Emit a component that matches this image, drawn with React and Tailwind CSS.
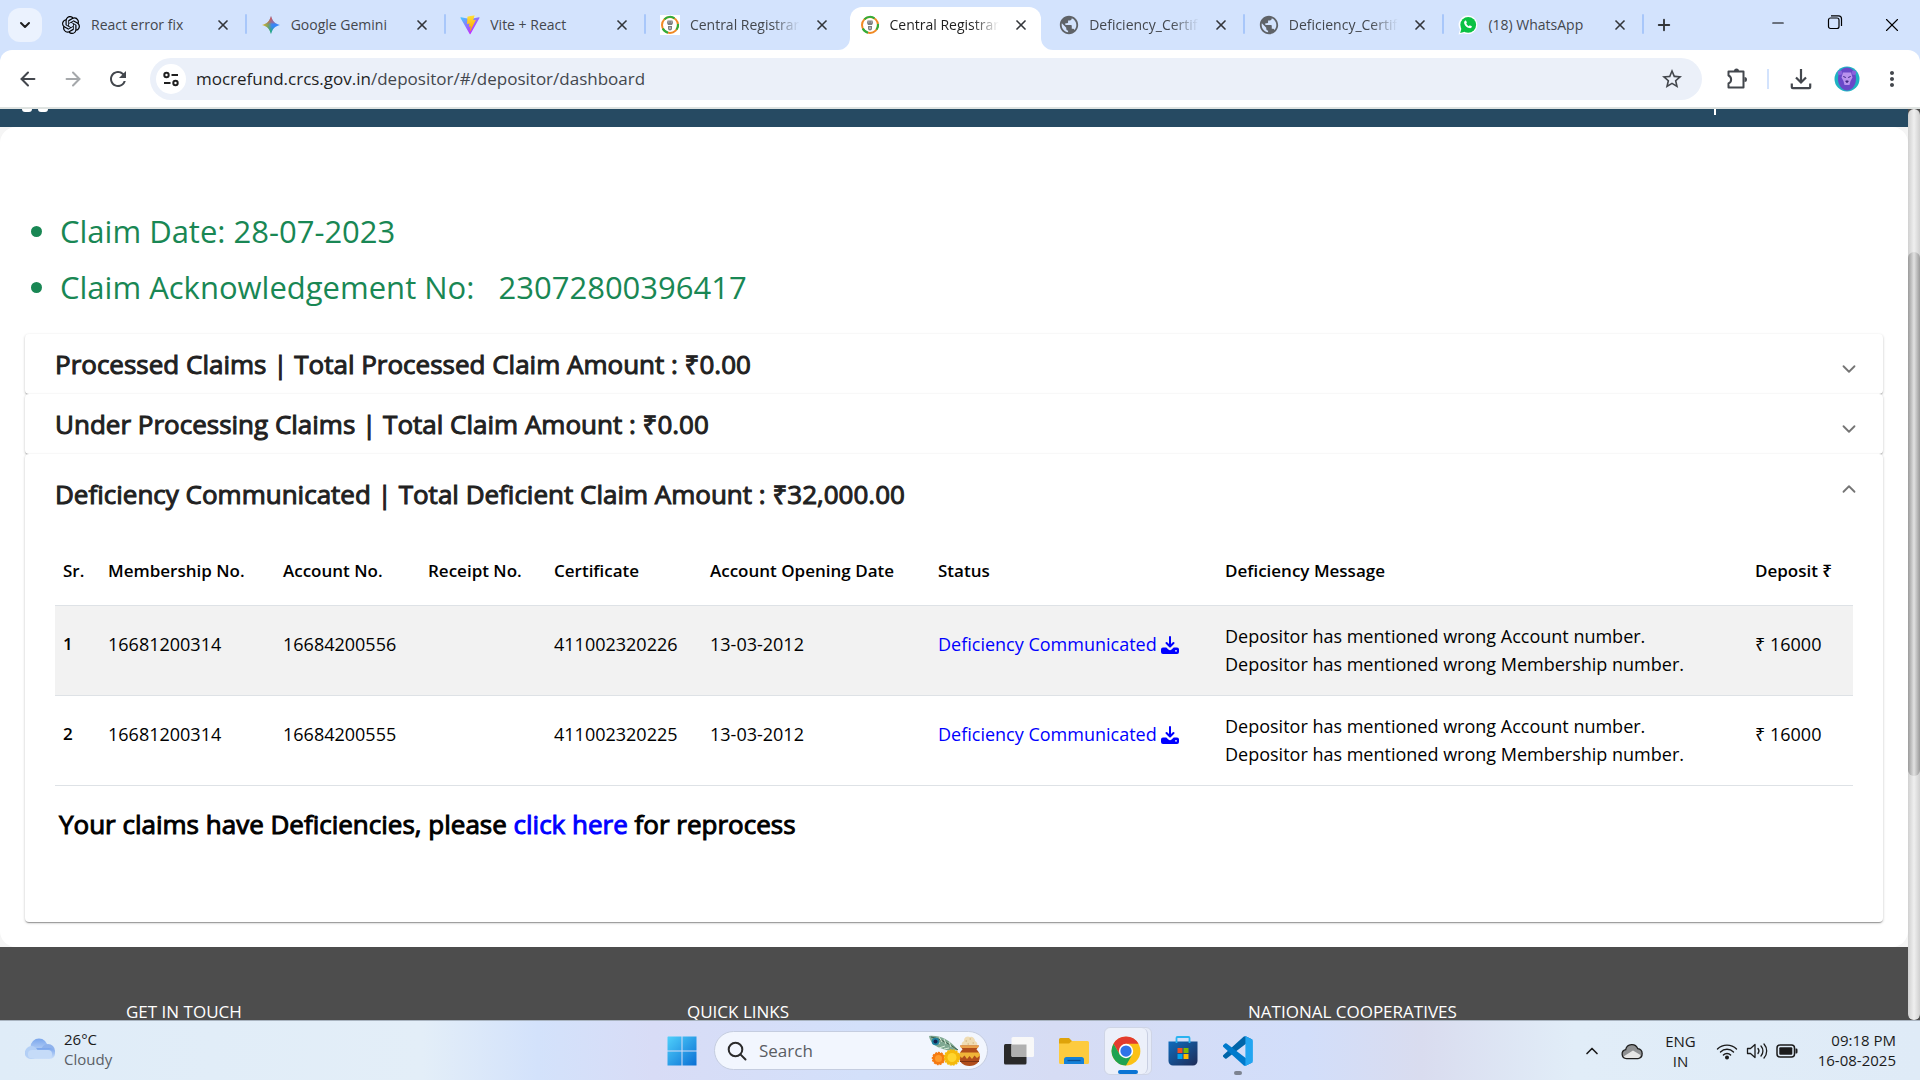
import React from "react";
import { SiOpenai } from "react-icons/si";
import { MdPublic, MdStarBorder, MdMoreVert, MdRefresh } from "react-icons/md";
import { ArrowLeft, ArrowRight, ChevronDown, ChevronUp, Minus, Plus, X } from "lucide-react";

function GeminiIcon() {
  return (
    <svg viewBox="0 0 18 18" className="size-[18px]">
      <defs>
        <linearGradient id="gemH" x1="0" y1="0" x2="1" y2="0">
          <stop offset="0" stopColor="#f6b80c" />
          <stop offset="0.35" stopColor="#7fa35c" />
          <stop offset="0.55" stopColor="#3b86f6" />
          <stop offset="1" stopColor="#3186ff" />
        </linearGradient>
        <linearGradient id="gemV" x1="0" y1="0" x2="0" y2="1">
          <stop offset="0" stopColor="#f0433c" />
          <stop offset="0.38" stopColor="#e8564a" stopOpacity="0.4" />
          <stop offset="0.5" stopColor="#3186ff" stopOpacity="0" />
          <stop offset="0.7" stopColor="#12b35c" stopOpacity="0.3" />
          <stop offset="1" stopColor="#0ebc5f" />
        </linearGradient>
      </defs>
      <path d="M9 0c1.200 5 4 7.800 9 9-5 1.200-7.800 4-9 9-1.200-5-4-7.800-9-9 5-1.200 7.800-4 9-9z" fill="url(#gemH)" />
      <path d="M9 0c1.200 5 4 7.800 9 9-5 1.200-7.800 4-9 9-1.200-5-4-7.800-9-9 5-1.200 7.800-4 9-9z" fill="url(#gemV)" />
    </svg>
  );
}

function ViteIcon() {
  return (
    <svg viewBox="0 0 410 404" className="size-5">
      <defs>
        <linearGradient id="viteA" x1="6" y1="33" x2="235" y2="344" gradientUnits="userSpaceOnUse">
          <stop stopColor="#41d1ff" />
          <stop offset="1" stopColor="#bd34fe" />
        </linearGradient>
        <linearGradient id="viteB" x1="194" y1="8" x2="236" y2="293" gradientUnits="userSpaceOnUse">
          <stop stopColor="#ffea83" />
          <stop offset="0.08" stopColor="#ffdd35" />
          <stop offset="1" stopColor="#ffa800" />
        </linearGradient>
      </defs>
      <path d="M399.600 59.500 215.600 388.500c-3.800 6.800-13.500 6.800-17.400.1L10.600 59.600c-4.200-7.500 2.100-16.500 10.500-15l184.200 32.900c1.200.2 2.400.2 3.500 0l180.300-32.900c8.400-1.500 14.800 7.400 10.500 14.900z" fill="url(#viteA)" />
      <path d="M293 1.600 156.800 28.300c-2.200.4-3.900 2.300-4 4.600l-8.400 141.500c-.2 3.300 2.900 5.900 6.100 5.200l37.900-8.800c3.600-.8 6.800 2.300 6 5.900l-11.300 55.200c-.8 3.700 2.700 6.900 6.300 5.800l23.400-7.100c3.600-1.100 7.100 2.100 6.300 5.800L201.300 323c-1.100 5.400 6.100 8.400 9.100 3.700l2-3.100L323.200 102.600c1.900-3.700-1.300-7.900-5.400-7.100l-39 7.500c-3.700.7-6.800-2.700-5.800-6.300l25.500-88.300c1.100-3.700-2.100-7.200-5.500-6.800z" fill="url(#viteB)" />
    </svg>
  );
}

function EmblemIcon() {
  return (
    <svg viewBox="0 0 20 20" className="size-5 bg-white">
      <circle cx="10" cy="10" r="8" fill="#fff" stroke="#f08a24" strokeWidth="2" />
      <path d="M4.500 4.200A8 8 0 0 1 14.500 3.300M2.800 13.500A8 8 0 0 0 8 17.700M16.500 14.700A8 8 0 0 0 18 9" fill="none" stroke="#2fae3a" strokeWidth="2.200" />
      <path d="M7.500 5.500h5l.5 2.500-1 2h-4l-1-2zM8 11h4v2.500a2 2 0 0 1-4 0z" fill="#7c7f82" />
      <path d="M8.500 7h.8M10.800 7h.8M9 13h2" stroke="#e9e9e9" />
    </svg>
  );
}

function WhatsappTabIcon() {
  return (
    <svg viewBox="0 0 20 20" className="size-5">
      <path d="M10 .5a9.300 9.300 0 1 1-4 17.700L.5 19.500 2 14.600A9.300 9.300 0 0 1 10 .5z" fill="#fff" />
      <circle cx="10.200" cy="9.800" r="7.900" fill="#0bc143" />
      <path d="M2.200 18l1.300-4.800 3.400 3.500z" fill="#0bc143" />
      <path d="M7.300 5.600c.5-.2.800 0 1 .5l.5 1.300c.1.300 0 .6-.6 1.200.5 1.200 1.500 2.100 2.700 2.600.5-.6.8-1 1.200-.8l1.400.7c.4.200.5.500.2 1.100-.6 1-1.500 1.200-2.600.9-2.400-.7-4-2.200-4.900-4.600-.3-1.300.2-2.400 1.100-2.900z" fill="#fff" />
    </svg>
  );
}

const GlobeIcon = () => <MdPublic className="size-[22px] text-[#5f6368]" />;
const OpenAiTabIcon = () => <SiOpenai className="size-[18px] text-black" />;

const TABS = [
  { title: "React error fix", Icon: OpenAiTabIcon, divider: true },
  { title: "Google Gemini", Icon: GeminiIcon, divider: true },
  { title: "Vite + React", Icon: ViteIcon, divider: true },
  { title: "Central Registrar", Icon: EmblemIcon, fade: true },
  { title: "Central Registrar", Icon: EmblemIcon, fade: true, active: true },
  { title: "Deficiency_Certif", Icon: GlobeIcon, fade: true, divider: true },
  { title: "Deficiency_Certif", Icon: GlobeIcon, fade: true, divider: true },
  { title: "(18) WhatsApp", Icon: WhatsappTabIcon, divider: true },
];

function TabCurve({ className }) {
  return (
    <svg viewBox="0 0 12 12" className={className} aria-hidden="true">
      <path d="M12 0v12H0A12 12 0 0 0 12 0z" fill="#fff" />
    </svg>
  );
}

function Tab({ title, Icon, fade, divider, active }) {
  return (
    <div className="relative flex h-[50px] min-w-0 flex-1 items-end">
      {active && (
        <>
          <div className="absolute inset-x-1 top-[7px] bottom-0 rounded-t-xl bg-white" />
          <TabCurve className="absolute bottom-0 -left-2 size-3" />
          <TabCurve className="absolute -right-2 bottom-0 size-3 -scale-x-100" />
        </>
      )}
      <div className="relative flex h-[50px] w-full items-center pr-4 pl-[13px]">
        <span className="flex w-[22px] shrink-0 justify-center"><Icon /></span>
        <span
          className={
            "ml-[9px] w-0 flex-1 text-sm whitespace-nowrap " +
            (fade ? "[mask-image:linear-gradient(to_right,black_75%,transparent)] " : "") +
            (active ? "text-[#1f1f1f]" : "text-[#43474d]")
          }
        >
          {title}
        </span>
        <button aria-label={"Close " + title} className="ml-[14px] shrink-0 text-[#33363a]">
          <X className="size-4" strokeWidth={2.500} />
        </button>
      </div>
      {divider && <div className="absolute top-[14px] right-0 h-5 w-0.5 rounded bg-[#a8c7fa]" />}
    </div>
  );
}

function TabStrip() {
  return (
    <div className="flex h-[50px] shrink-0 items-center bg-[#d3e3fd] pl-2">
      <button aria-label="Search tabs" className="mr-[5px] flex size-[34px] shrink-0 items-center justify-center rounded-xl bg-[#ebf2fe] text-[#1f1f1f]">
        <ChevronDown className="size-4" strokeWidth={3} />
      </button>
      <div className="flex min-w-0 max-w-[1597px] flex-1">
        {TABS.map((t, i) => <Tab key={i} {...t} />)}
      </div>
      <button aria-label="New tab" className="ml-[11px] text-[#33363a]">
        <Plus className="size-[18px]" strokeWidth={2.500} />
      </button>
      <div className="ml-auto flex shrink-0 text-black">
        <button aria-label="Minimize" className="flex w-[57px] justify-center"><Minus className="size-[18px]" strokeWidth={1.500} /></button>
        <button aria-label="Restore" className="flex w-[57px] justify-center">
          <svg viewBox="0 0 16 16" className="size-4" fill="none" stroke="currentColor" strokeWidth="1.200">
            <rect x="1.500" y="4" width="10.500" height="10.500" rx="2" />
            <path d="M4 1.800h7.500a3 3 0 0 1 3 3V12" />
          </svg>
        </button>
        <button aria-label="Close window" className="flex w-[57px] justify-center"><X className="size-[22px]" strokeWidth={1.200} /></button>
      </div>
    </div>
  );
}

function Toolbar() {
  return (
    <div className="shrink-0 bg-[#d3e3fd]">
      <div className="flex h-[57px] items-center rounded-t-xl bg-white pr-4 pl-[17px] text-[#43474d]">
        <button aria-label="Back" className="mr-[23px]"><ArrowLeft className="size-[22px]" strokeWidth={2.200} /></button>
        <button aria-label="Forward" className="mr-[22px] text-[#a5a8ab]"><ArrowRight className="size-[22px]" strokeWidth={2.200} /></button>
        <button aria-label="Reload" className="mr-5"><MdRefresh className="size-6" /></button>
        <div className="flex h-[42px] min-w-0 flex-1 items-center rounded-full bg-[#ebf0f9] pr-[18px] pl-1.5">
          <button aria-label="Site information" className="flex size-[30px] shrink-0 items-center justify-center rounded-full bg-white text-[#1f1f1f]">
            <svg viewBox="0 0 18 18" className="size-[18px]" fill="none" stroke="currentColor" strokeWidth="2">
              <circle cx="4.500" cy="5" r="2.200" />
              <path d="M9.500 5H16M2 13h6.500" />
              <circle cx="13.500" cy="13" r="2.200" />
            </svg>
          </button>
          <a href="#/depositor/dashboard" className="ml-2.5 min-w-0 flex-1 truncate text-[17px] text-[#43474d]">
            <span className="text-[#1f1f1f]">mocrefund.crcs.gov.in</span>/depositor/#/depositor/dashboard
          </a>
          <button aria-label="Bookmark"><MdStarBorder className="size-6" /></button>
        </div>
        <button aria-label="Extensions" className="ml-[22px]">
          <svg viewBox="0 0 24 24" className="size-6" fill="none" stroke="currentColor" strokeWidth="2" strokeLinejoin="round">
            <path d="M4.500 4.500H19.500V20.500H4.500V16.500C8 15 8 10 4.500 8.500z" />
            <path d="M10 4a2.500 2.500 0 0 1 5 0zM20.500 10a2.500 2.500 0 0 1 0 5z" fill="currentColor" stroke="none" />
          </svg>
        </button>
        <div className="ml-[19px] h-5 w-0.5 bg-[#d3e3fd]" />
        <button aria-label="Downloads" className="ml-[21px]">
          <svg viewBox="0 0 22 22" className="size-[22px]" fill="none" stroke="currentColor" strokeWidth="2.200">
            <path d="M11 1v13M6 9.500l5 5 5-5M1.800 15.500v3.700a1 1 0 0 0 1 1h16.400a1 1 0 0 0 1-1v-3.700" />
          </svg>
        </button>
        <button aria-label="Profile" className="ml-[22px]">
          <svg viewBox="0 0 26 26" className="size-[26px]">
            <circle cx="13" cy="13" r="12.500" fill="#1fb3c3" />
            <path d="M13 1.500c5 0 9 4.500 9 11.500 0 6-4 11.500-9 11.500S4 19 4 13C4 6 8 1.500 13 1.500z" fill="#6a48c9" />
            <circle cx="6" cy="6.800" r="2.300" fill="#8a63dc" />
            <circle cx="20" cy="6.800" r="2.300" fill="#8a63dc" />
            <path d="M9 6.500h8l1.500 5-2 3.500-1 4h-5l-1-4-2-3.500z" fill="#b993ee" />
            <path d="M9.300 10.500l2.500 1M16.700 10.500l-2.500 1M11.700 15h2.600L13 16.700z" stroke="#3b2582" fill="#3b2582" />
          </svg>
        </button>
        <button aria-label="Menu" className="ml-5"><MdMoreVert className="size-6" /></button>
      </div>
      <div className="h-0.5 bg-[#dfe3e1]" />
    </div>
  );
}

function DownloadIcon() {
  return (
    <svg viewBox="0 0 18 18" className="inline size-[18px] align-[-3px]" aria-hidden="true">
      <path d="M9 1v9M5.500 7 9 10.500 12.500 7" fill="none" stroke="currentColor" strokeWidth="2" strokeLinecap="round" strokeLinejoin="round" />
      <path d="M2 11.500h3.300L7.400 13.600a2.300 2.300 0 0 0 3.200 0l2.100-2.100H16a2 2 0 0 1 2 2V16a2 2 0 0 1-2 2H2a2 2 0 0 1-2-2v-2.500a2 2 0 0 1 2-2z" fill="currentColor" />
      <circle cx="15" cy="14.800" r="0.900" fill="#fff" />
    </svg>
  );
}

const PANEL = "rounded bg-white shadow-[0_2px_1px_-1px_rgba(0,0,0,.2),0_1px_1px_rgba(0,0,0,.14),0_1px_3px_rgba(0,0,0,.2)]";
const HEADING = "text-[26px] leading-9 text-[#212121] [-webkit-text-stroke:1px]";

function CollapsedPanel({ title }) {
  return (
    <section className={PANEL}>
      <button aria-expanded="false" className="flex h-[60px] w-full items-center justify-between pr-[23px] pl-[30px]">
        <span className={HEADING}>{title}</span>
        <ChevronDown className="mt-2.5 size-[22px] text-[#757575]" strokeWidth={2} />
      </button>
    </section>
  );
}

const COLUMNS = ["Sr.", "Membership No.", "Account No.", "Receipt No.", "Certificate", "Account Opening Date", "Status", "Deficiency Message", "Deposit ₹"];

const ROWS = [
  { sr: 1, membership: "16681200314", account: "16684200556", certificate: "411002320226", date: "13-03-2012" },
  { sr: 2, membership: "16681200314", account: "16684200555", certificate: "411002320225", date: "13-03-2012" },
];

function ClaimsTable() {
  return (
    <table className="mt-1 w-full table-fixed text-left text-lg leading-7 text-black">
      <colgroup>
        <col className="w-[45px]" />
        <col className="w-[175px]" />
        <col className="w-[145px]" />
        <col className="w-[126px]" />
        <col className="w-[156px]" />
        <col className="w-[228px]" />
        <col className="w-[287px]" />
        <col />
        <col className="w-[106px]" />
      </colgroup>
      <thead>
        <tr className="h-[67px] border-b border-[#dee2e6]">
          {COLUMNS.map((c) => <th key={c} scope="col" className="px-2 text-[17px] font-semibold whitespace-nowrap">{c}</th>)}
        </tr>
      </thead>
      <tbody>
        {ROWS.map((r) => (
          <tr key={r.sr} className="h-[90px] border-b border-[#dee2e6] align-top odd:bg-[#f2f2f2]">
            <th scope="row" className="px-2 pt-6 text-[17px] font-semibold">{r.sr}</th>
            <td className="px-2 pt-6">{r.membership}</td>
            <td className="px-2 pt-6">{r.account}</td>
            <td className="px-2 pt-6" />
            <td className="px-2 pt-6">{r.certificate}</td>
            <td className="px-2 pt-6">{r.date}</td>
            <td className="px-2 pt-6 whitespace-nowrap">
              <a href="#deficiency" className="text-[#0000ff]">Deficiency Communicated <DownloadIcon /></a>
            </td>
            <td className="px-2 pt-4 whitespace-nowrap">
              <p>Depositor has mentioned wrong Account number.</p>
              <p>Depositor has mentioned wrong Membership number.</p>
            </td>
            <td className="px-2 pt-6 whitespace-nowrap">₹ 16000</td>
          </tr>
        ))}
      </tbody>
    </table>
  );
}

function WebPage() {
  return (
    <div className="flex min-h-0 flex-1 overflow-hidden bg-[#4d4d4d]">
      <div className="min-w-0 flex-1">
        <header className="flex h-[18px] items-start justify-between bg-[#264a62] pr-48 pl-[22px]">
          <div className="flex gap-1.5">
            <span className="h-[3px] w-2.5 rounded-b bg-white" />
            <span className="h-[3px] w-2.5 rounded-b bg-white" />
          </div>
          <span className="h-1.5 w-0.5 bg-white" />
        </header>
        <div className="bg-[#f5f5f5]">
          <main className="rounded-2xl bg-white px-[25px] pt-[76px] pb-[25px]">
            <ul className="list-disc pl-[35px] text-[31px] leading-[56px] text-[#198754]">
              <li>Claim Date: 28-07-2023</li>
              <li>Claim Acknowledgement No: &nbsp; 23072800396417</li>
            </ul>
            <div className="mt-[19px]">
              <CollapsedPanel title="Processed Claims | Total Processed Claim Amount : ₹0.00" />
              <CollapsedPanel title="Under Processing Claims | Total Claim Amount : ₹0.00" />
              <section className={PANEL}>
                <button aria-expanded="true" className="flex h-[80px] w-full items-center justify-between pr-[23px] pl-[30px]">
                  <span className={HEADING}>Deficiency Communicated | Total Deficient Claim Amount : ₹32,000.00</span>
                  <ChevronUp className="mb-2.5 size-[22px] text-[#757575]" strokeWidth={2} />
                </button>
                <div className="px-[30px] pb-[80px]">
                  <ClaimsTable />
                  <p className="mt-5 pl-1 text-[26px] leading-9 text-black [-webkit-text-stroke:1px]">
                    Your claims have Deficiencies, please <a href="#reprocess" className="text-[#0000ff]">click here</a> for reprocess
                  </p>
                </div>
              </section>
            </div>
          </main>
        </div>
        <footer className="grid grid-cols-3 bg-[#4d4d4d] pt-[51px] pr-[99px] pl-[126px] text-[17px] leading-7 text-white">
          <h2>GET IN TOUCH</h2>
          <h2>QUICK LINKS</h2>
          <h2>NATIONAL COOPERATIVES</h2>
        </footer>
      </div>
      <div className="w-3 shrink-0 rounded-full bg-linear-to-r from-[#d0d0d0] via-[#efefef] to-[#d0d0d0] pt-[143px]">
        <div className="h-[524px] rounded-full bg-linear-to-r from-[#9a9a9a] via-[#e2e2e2] to-[#9a9a9a]" />
      </div>
    </div>
  );
}

function Taskbar() {
  return (
    <div className="grid h-[60px] shrink-0 grid-cols-[1fr_auto_1fr] items-center border-t border-[#a9b4c0] bg-[linear-gradient(90deg,#dfecf8_0%,#e3eef8_22%,#d3e2fb_28%,#d8dcf6_34%,#d3e0fa_45%,#d6dcf4_55%,#d2defa_68%,#d9dcef_74%,#e1edf8_82%,#dfebf7_100%)] text-[15px] text-[#1b1b1b]">
      <button className="flex items-center gap-2 pb-1 pl-6 text-left leading-5">
        <svg viewBox="0 0 32 22" className="w-8">
          <defs>
            <linearGradient id="wc" x1="0" y1="0" x2="0" y2="1">
              <stop offset="0" stopColor="#7ba6ec" />
              <stop offset="1" stopColor="#cfe2fb" />
            </linearGradient>
          </defs>
          <circle cx="15" cy="9" r="8.500" fill="url(#wc)" />
          <circle cx="24" cy="13" r="7" fill="#8fb2ec" />
          <rect x="1" y="10" width="30" height="11" rx="5.500" fill="url(#wc)" />
          <circle cx="7.500" cy="14.500" r="6.500" fill="#b4d0f6" />
          <rect x="4" y="12" width="24" height="8.500" rx="4" fill="#c5dbf8" />
        </svg>
        <span>
          <span className="block">26°C</span>
          <span className="block text-[#5a5f66]">Cloudy</span>
        </span>
      </button>

      <div className="flex items-center">
        <button aria-label="Start">
          <svg viewBox="0 0 30 30" className="size-[30px]">
            <defs>
              <linearGradient id="win" x1="0" y1="0" x2="1" y2="1">
                <stop offset="0" stopColor="#4fd0fb" />
                <stop offset="1" stopColor="#0a6fd4" />
              </linearGradient>
            </defs>
            <path d="M1 .5h13.500v14H.5V1zM15.500.5H29.500v14h-14zM.5 15.500h14v14H.5zM15.500 15.500h14v14h-14z" fill="url(#win)" />
          </svg>
        </button>
        <label className="ml-[17px] flex h-[39px] w-[274px] items-center rounded-full border border-[#c5cde0] bg-[#f2f6fe] pr-1.5 pl-3">
          <svg viewBox="0 0 20 20" className="size-5 shrink-0" fill="none" stroke="#2b2b2b" strokeWidth="2">
            <circle cx="8.500" cy="8.500" r="6.800" />
            <path d="M13.400 13.400 18.500 18.500" strokeLinecap="round" />
          </svg>
          <input type="text" placeholder="Search" aria-label="Search" className="ml-3 w-0 flex-1 bg-transparent text-[17px] outline-none placeholder:text-[#5a5d63]" />
          <svg viewBox="0 0 52 32" className="h-8 w-[52px] shrink-0">
            <path d="M0 1c10-1 20 3 29 14-4 1-10 1-15-1C6 12 1 7 0 1z" fill="#7fa892" />
            <path d="M2 2c10 2 18 7 27 13" stroke="#3f5f4a" fill="none" />
            <path d="M10 2l3 5M15 4l2 5M20 7l2 5M5 10l6-2M10 13l6-2M15 14l5-1" stroke="#d6ead6" fill="none" />
            <circle cx="6.500" cy="6.500" r="3.800" fill="#1d7f9f" />
            <circle cx="6.500" cy="6.500" r="2" fill="#16224f" />
            <path d="M33 11a4 4 0 0 1 2-5 4 4 0 0 1 6-4 4 4 0 0 1 5 4 4 4 0 0 1 2 5z" fill="#efdcb4" />
            <path d="M37 6h.5M41 4h.5M44 8h.5M39 9h.5" stroke="#c9ab74" strokeLinecap="round" />
            <path d="M31 10.500h19l-2.500 4c6 5 4 16.500-7 16.500s-13-11.500-7-16.500z" fill="#b04d1a" />
            <path d="M31 10.500h19l-1 2.500H32z" fill="#e9a04a" />
            <path d="M31 17.500h19l1 3-3 2.500-2.500-2.500L43 24l-2.500-3-2.500 3-2.500-3.500L33 23l-3-2.500z" fill="#f0b438" />
            <path d="M31 26.500h19" stroke="#7d3210" />
            <circle cx="9.500" cy="23.500" r="6" fill="#f57a12" stroke="#f57a12" strokeWidth="1.500" strokeDasharray="2 1" />
            <circle cx="9.500" cy="23.500" r="3.500" fill="#ff9b2c" />
            <circle cx="23" cy="22.500" r="7.500" fill="#f5b90c" stroke="#f5b90c" strokeWidth="1.500" strokeDasharray="2 1" />
            <circle cx="23" cy="22.500" r="4.500" fill="#ffd52e" />
          </svg>
        </label>
        <button aria-label="Task view" className="ml-[15px]">
          <svg viewBox="0 0 32 30" className="h-[30px] w-8">
            <rect x="1" y="8" width="22.500" height="20.500" rx="1.500" fill="#2a2a2a" />
            <rect x="8.500" y="1" width="22.500" height="20" rx="1.500" fill="#f8f8f8" />
            <path d="M8.500 8.500h15v12.500H10a1.500 1.500 0 0 1-1.500-1.500z" fill="#b0b0b0" />
          </svg>
        </button>
        <button aria-label="File Explorer" className="ml-6">
          <svg viewBox="0 0 30 28" className="h-7 w-[30px]">
            <path d="M0 2.500A1.500 1.500 0 0 1 1.500 1H10l3 3v6H0z" fill="#dfa30a" />
            <path d="M0 6.500h10L13 4h15.500A1.500 1.500 0 0 1 30 5.500v20a1.500 1.500 0 0 1-1.500 1.500h-27A1.500 1.500 0 0 1 0 25.500z" fill="#fdcb3f" />
            <path d="M5 27v-4.500A2.500 2.500 0 0 1 7.500 20h15a2.500 2.500 0 0 1 2.500 2.500V27z" fill="#1480d8" />
            <path d="M8.500 23.500h13" stroke="#0b4f91" strokeWidth="1.300" />
          </svg>
        </button>
        <div className="relative ml-[15px] h-12 w-12 rounded-md border border-[#cfd5e6] bg-[#e6ebf8]">
          <button aria-label="Google Chrome" className="flex h-[46px] w-[43px] items-center justify-center rounded-md border-r border-[#c9cfe2] bg-[#ecf0fa] pr-px">
            <svg viewBox="0 0 48 48" className="size-[30px]">
              <circle cx="24" cy="24" r="23" fill="#fbc116" />
              <path d="M4.080 12.500A23 23 0 0 1 43.920 12.500H24L14 29.750z" fill="#e33b2e" />
              <path d="M4.080 12.500A23 23 0 0 0 24 47l10-17.250-10 5.750-10-5.750z" fill="#1fa352" />
              <circle cx="24" cy="24" r="11.500" fill="#fff" />
              <circle cx="24" cy="24" r="9" fill="#2f73e8" />
            </svg>
          </button>
          <span className="absolute bottom-0 left-[13px] h-1 w-5 rounded-full bg-[#0a74d4]" />
        </div>
        <button aria-label="Microsoft Store" className="ml-4">
          <svg viewBox="0 0 30 30" className="size-[30px]">
            <defs>
              <linearGradient id="store" x1="0" y1="0" x2="1" y2="1">
                <stop offset="0" stopColor="#0f6cbd" />
                <stop offset="1" stopColor="#1f2b57" />
              </linearGradient>
            </defs>
            <path d="M.5 5.500h29V25a4.500 4.500 0 0 1-4.500 4.500H5A4.500 4.500 0 0 1 .5 25z" fill="url(#store)" />
            <path d="M8.500 7V2a1 1 0 0 1 1-1h11a1 1 0 0 1 1 1v5" fill="none" stroke="#2ab3f0" strokeWidth="1.800" />
            <path d="M9.500 12h5v5h-5z" fill="#f25022" />
            <path d="M15.500 12h5v5h-5z" fill="#7fba00" />
            <path d="M9.500 18h5v5h-5z" fill="#00a4ef" />
            <path d="M15.500 18h5v5h-5z" fill="#ffb900" />
          </svg>
        </button>
        <div className="relative ml-[25px] flex h-12 items-center">
          <button aria-label="Visual Studio Code">
            <svg viewBox="0 0 100 100" className="size-[30px]">
              <path d="M96 11 75.500 1.200a6.200 6.200 0 0 0-7.100 1.200L1.300 63.600a4.200 4.200 0 0 0 0 6.200l5.500 5a4.200 4.200 0 0 0 5.300.2L93 13.700a4.100 4.100 0 0 1 6.600 3.300v-.2c0-2.500-1.400-4.700-3.600-5.800z" fill="#0065a9" />
              <path d="M96 89 75.500 98.800a6.200 6.200 0 0 1-7.100-1.200L1.300 36.400a4.200 4.200 0 0 1 0-6.200l5.500-5a4.200 4.200 0 0 1 5.300-.2L93 86.300a4.100 4.100 0 0 0 6.600-3.300v.2c0 2.500-1.400 4.700-3.600 5.800z" fill="#007acc" />
              <path d="M75.500 98.800a6.200 6.200 0 0 1-7.100-1.200 3.700 3.700 0 0 0 6.300-2.600V5a3.700 3.700 0 0 0-6.300-2.600 6.200 6.200 0 0 1 7.100-1.200L96 11a6.200 6.200 0 0 1 3.600 5.600v66.800A6.200 6.200 0 0 1 96 89z" fill="#22a5f1" />
            </svg>
          </button>
          <span className="absolute bottom-0 left-[11px] h-1 w-2 rounded-full bg-[#7d8390]" />
        </div>
      </div>

      <div className="flex items-center justify-end pr-6 leading-5">
        <button aria-label="Show hidden icons" className="mr-[19px]"><ChevronUp className="size-5" strokeWidth={2} /></button>
        <svg viewBox="0 0 22 18" className="mr-[22px] w-[22px]">
          <path d="M5.500 16.500a4.500 4.500 0 0 1-.8-8.900 6.300 6.300 0 0 1 12-1 5 5 0 0 1 .3 9.900z" fill="#8f9193" stroke="#1f1f1f" strokeWidth="1.300" />
          <path d="M2.500 14.500 12 8.500l7.500 4.500c-.3 1.800-1.300 2.800-3 2.900H5.500c-1.300 0-2.400-.5-3-1.400z" fill="#e6e6e6" />
        </svg>
        <span className="mr-5 text-center">ENG<br />IN</span>
        <svg viewBox="0 0 22 18" className="mr-2 w-[22px]" fill="none" stroke="#1b1b1b" strokeWidth="1.400" strokeLinecap="round">
          <path d="M1.500 7a13.500 13.500 0 0 1 19 0M4.500 10a9.200 9.200 0 0 1 13 0M7.400 13a5.100 5.100 0 0 1 7.200 0" />
          <circle cx="11" cy="15.500" r="1.300" fill="#1b1b1b" />
        </svg>
        <svg viewBox="0 0 22 18" className="mr-2 w-[22px]" fill="none" stroke="#1b1b1b" strokeWidth="1.300" strokeLinecap="round" strokeLinejoin="round">
          <path d="M1.500 6.500h3L9 2.500v13l-4.500-4h-3zM12 6.500a4 4 0 0 1 0 5M15 4a7.500 7.500 0 0 1 0 10M18 2a10.500 10.500 0 0 1 0 14" />
        </svg>
        <svg viewBox="0 0 22 14" className="mr-5 w-[22px]">
          <rect x="1" y="1" width="17.500" height="12" rx="3" fill="none" stroke="#1b1b1b" strokeWidth="1.500" />
          <rect x="3.300" y="3.300" width="13" height="7.500" rx="1" fill="#1b1b1b" />
          <path d="M19.500 4.500h.8a1.200 1.200 0 0 1 1.200 1.200v2.600a1.200 1.200 0 0 1-1.200 1.200h-.8z" fill="#1b1b1b" />
        </svg>
        <span className="pb-0.5 text-right">09:18 PM<br />16-08-2025</span>
      </div>
    </div>
  );
}

export default function App() {
  return (
    <div className="flex h-screen flex-col overflow-hidden bg-white font-['Open_Sans','Noto_Sans',sans-serif]">
      <TabStrip />
      <Toolbar />
      <WebPage />
      <Taskbar />
    </div>
  );
}
